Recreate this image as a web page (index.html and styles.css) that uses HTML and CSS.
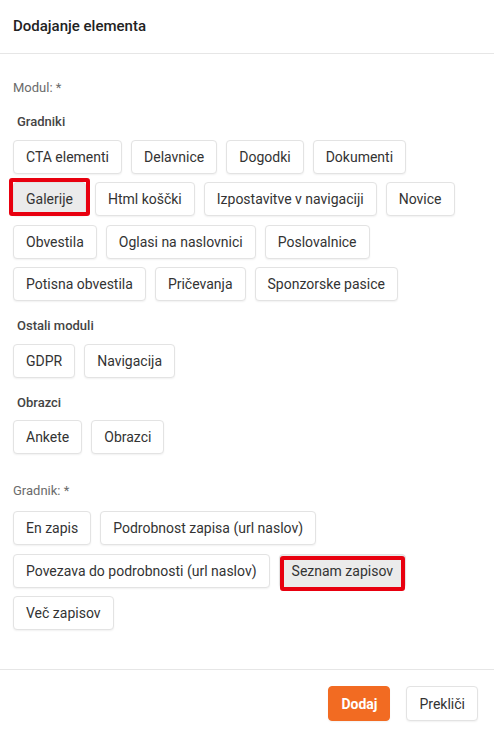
FILE: index.html
```html
<!DOCTYPE html>
<html lang="sl">
<head>
    <meta charset="UTF-8">
    <meta name="viewport" content="width=device-width, initial-scale=1.0">
    <title>Dodajanje elementa</title>
    <link rel="stylesheet" href="styles.css">
</head>
<body>
    <div class="dialog">
        <div class="dialog-header">
            <h2>Dodajanje elementa</h2>
        </div>

        <div class="dialog-body">
            <div class="field-label">Modul: *</div>

            <div class="group-title first">Gradniki</div>
            <div class="chips">
                <button class="chip">CTA elementi</button>
                <button class="chip">Delavnice</button>
                <button class="chip">Dogodki</button>
                <button class="chip">Dokumenti</button>
                <button class="chip selected mark-module">Galerije</button>
                <button class="chip">Html koščki</button>
                <button class="chip">Izpostavitve v navigaciji</button>
                <button class="chip">Novice</button>
                <button class="chip">Obvestila</button>
                <button class="chip">Oglasi na naslovnici</button>
                <button class="chip">Poslovalnice</button>
                <button class="chip">Potisna obvestila</button>
                <button class="chip">Pričevanja</button>
                <button class="chip">Sponzorske pasice</button>
            </div>

            <div class="group-title">Ostali moduli</div>
            <div class="chips">
                <button class="chip">GDPR</button>
                <button class="chip">Navigacija</button>
            </div>

            <div class="group-title">Obrazci</div>
            <div class="chips">
                <button class="chip">Ankete</button>
                <button class="chip">Obrazci</button>
            </div>

            <div class="field-label second">Gradnik: *</div>
            <div class="chips widgets">
                <button class="chip">En zapis</button>
                <button class="chip">Podrobnost zapisa (url naslov)</button>
                <button class="chip">Povezava do podrobnosti (url naslov)</button>
                <button class="chip selected mark-widget">Seznam zapisov</button>
                <button class="chip">Več zapisov</button>
            </div>
        </div>

        <div class="dialog-footer">
            <button class="btn btn-primary">Dodaj</button>
            <button class="btn">Prekliči</button>
        </div>
    </div>
</body>
</html>
```

FILE: styles.css
```css
body {
    font-family: Roboto, "Liberation Sans", Arial, sans-serif;
    margin: 0;
    background: #fff;
    color: #333;
}
.dialog {
    width: 494px;
}
.dialog-header {
    height: 54px;
    padding: 0 13px;
    display: flex;
    align-items: center;
    border-bottom: 1px solid #e6e6e6;
    box-sizing: border-box;
}
.dialog-header h2 {
    margin: 0 0 2px;
    font-size: 15px;
    font-weight: 500;
    color: #222;
}
.dialog-body {
    padding: 26px 16px 39px 13px;
}
.field-label {
    font-size: 13px;
    line-height: 16px;
    color: #6b6b6b;
}
.field-label.second {
    margin-top: 29px;
}
.group-title {
    margin: 17px 0 0 4px;
    font-size: 13px;
    line-height: 16px;
    font-weight: 500;
    color: #444;
}
.group-title.first {
    margin-top: 18px;
}
.chips {
    display: flex;
    flex-wrap: wrap;
    gap: 8.5px 9px;
    margin-top: 9.5px;
}
.chips.widgets {
    margin-top: 12px;
}
.chip {
    position: relative;
    height: 34px;
    padding: 0 12px;
    font-family: inherit;
    font-size: 14px;
    color: #333;
    background: #fff;
    border: 1px solid #e3e3e3;
    border-radius: 4px;
    box-shadow: 0 1px 2px rgba(0,0,0,0.06);
    cursor: pointer;
}
.chip.selected {
    background: #ebebeb;
}
/* red annotation frames */
.chip.selected::after {
    content: "";
    position: absolute;
    border: 4px solid #e8000f;
    border-radius: 3px;
}
.mark-module::after {
    top: -5px;
    bottom: -1px;
    left: -5px;
    right: -5px;
}
.mark-widget::after {
    top: 1px;
    bottom: -4px;
    left: 0;
    right: 0;
}
.dialog-footer {
    display: flex;
    justify-content: flex-end;
    gap: 16px;
    padding: 16px 16px 8px;
    border-top: 1px solid #e6e6e6;
}
.btn {
    height: 35px;
    padding: 0 12px;
    font-family: inherit;
    font-size: 14px;
    color: #333;
    background: #fff;
    border: 1px solid #e3e3e3;
    border-radius: 4px;
    box-shadow: 0 1px 2px rgba(0,0,0,0.06);
    cursor: pointer;
}
.btn-primary {
    background-color: #f26b22;
    border-color: #f26b22;
    color: #fff;
    font-weight: 700;
}
```
